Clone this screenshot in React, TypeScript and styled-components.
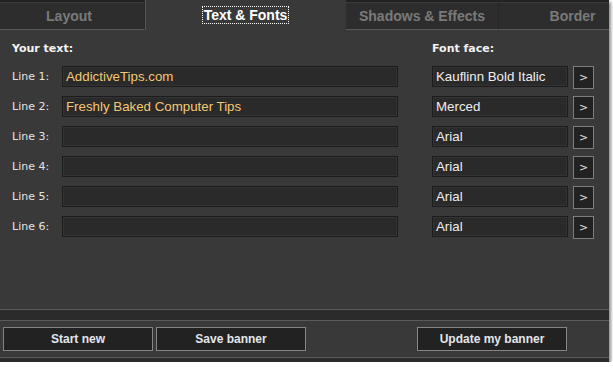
import React from 'react'
import styled, { createGlobalStyle } from 'styled-components'

const GlobalStyle = createGlobalStyle`
  body {
    margin: 0;
    background: #ffffff;
    font-family: "Liberation Sans", Arial, sans-serif;
  }
`

const Window = styled.div`
  display: flex;
  flex-direction: column;
  width: 609px;
  height: 362px;
  overflow: hidden;
  background-color: #393939;
  box-shadow: 2px 2px 3px rgba(0, 0, 0, 0.45);
`

const TabBar = styled.div`
  display: flex;
  flex: 0 0 30px;
  background-color: #232323;
`

const Tab = styled.div<{ $width: number; $active?: boolean; $shift?: number }>`
  flex: 0 0 ${p => p.$width}px;
  display: flex;
  align-items: center;
  justify-content: center;
  box-sizing: border-box;
  margin-top: ${p => (p.$active ? 0 : 2)}px;
  padding-bottom: ${p => (p.$active ? 0 : 1)}px;
  padding-right: ${p => p.$shift ?? 0}px;

  background-color: ${p => (p.$active ? '#393939' : '#2d2d2d')};
  border-top: ${p => (p.$active ? 'none' : '1px solid #3a3a3a')};
  border-bottom: ${p => (p.$active ? 'none' : '1px solid #5a5a5a')};
  border-right: 1px solid ${p => (p.$active ? '#393939' : '#262626')};
  border-left: ${p => (p.$active ? '1px solid #5a5a5a' : 'none')};

  color: ${p => (p.$active ? '#ffffff' : '#7a7a7a')};
  font-size: 14px;
  font-weight: bold;
`

const TabLabel = styled.span<{ $focused?: boolean }>`
  padding: 0 1px;
  line-height: 16px;
  outline: ${p => (p.$focused ? '1px dotted #ffffff' : 'none')};
  outline-offset: 0;
`

const Content = styled.div`
  flex: 1 1 auto;
  padding: 12px 0 0 12px;
`

const HeaderRow = styled.div`
  display: grid;
  grid-template-columns: 420px auto;
  height: 24px;
  color: #f2f2f2;
  font-family: "DejaVu Sans", Verdana, sans-serif;
  font-size: 11px;
  font-weight: bold;
`

const Row = styled.div`
  display: flex;
  align-items: flex-start;
  height: 30px;
`

const LineLabel = styled.div`
  flex: 0 0 50px;
  line-height: 21px;
  color: #e4e4e4;
  font-family: "DejaVu Sans", Verdana, sans-serif;
  font-size: 11px;
`

const Field = styled.div<{ $width: number; $color: string }>`
  flex: 0 0 ${p => p.$width}px;
  box-sizing: border-box;
  height: 21px;
  padding: 0 3px;
  background-color: #2a2a2a;
  border: 1px solid #1c1c1c;
  box-shadow: inset 0 0 0 1px #333;
  color: ${p => p.$color};
  font-size: 13.3px;
  line-height: 19px;
  white-space: nowrap;
  overflow: hidden;
`

const FontField = styled(Field)`
  margin-left: 34px;
`

const PickButton = styled.div`
  flex: 0 0 21px;
  box-sizing: border-box;
  height: 23px;
  margin-left: 5px;
  display: flex;
  align-items: center;
  justify-content: center;
  background-color: #222222;
  border: 1px solid #7d7d7d;
  color: #e0e0e0;
  font-family: "DejaVu Sans", Verdana, sans-serif;
  font-size: 11px;
`

const DividerBar = styled.div`
  flex: 0 0 10px;
  background-color: #2b2b2b;
  border-top: 1px solid #5a5a5a;
  border-bottom: 1px solid #5a5a5a;
`

const Footer = styled.div`
  display: flex;
  padding: 6px 3px 6px 3px;
  border-bottom: 1px solid #5a5a5a;
`

const ActionButton = styled.div<{ $offset?: number }>`
  flex: 0 0 150px;
  box-sizing: border-box;
  height: 24px;
  margin-left: ${p => p.$offset ?? 0}px;
  display: flex;
  align-items: center;
  justify-content: center;
  background-color: #222222;
  border: 1px solid #858585;
  color: #e2e6ec;
  font-size: 12px;
  font-weight: bold;
`

const BottomStrip = styled.div`
  flex: 0 0 4px;
  background-color: #2b2b2b;
`

const lines = [
  { text: 'AddictiveTips.com', font: 'Kauflinn Bold Italic' },
  { text: 'Freshly Baked Computer Tips', font: 'Merced' },
  { text: '', font: 'Arial' },
  { text: '', font: 'Arial' },
  { text: '', font: 'Arial' },
  { text: '', font: 'Arial' },
]

export default function App() {
  return (
    <>
      <GlobalStyle />
      <Window>
        <TabBar>
          <Tab $width={145} $shift={6}>
            <TabLabel>Layout</TabLabel>
          </Tab>
          <Tab $width={201} $active>
            <TabLabel $focused>Text &amp; Fonts</TabLabel>
          </Tab>
          <Tab $width={153}>
            <TabLabel>Shadows &amp; Effects</TabLabel>
          </Tab>
          <Tab $width={148}>
            <TabLabel>Border</TabLabel>
          </Tab>
        </TabBar>
        <Content>
          <HeaderRow>
            <span>Your text:</span>
            <span>Font face:</span>
          </HeaderRow>
          {lines.map((line, i) => (
            <Row key={i}>
              <LineLabel>Line {i + 1}:</LineLabel>
              <Field $width={336} $color="#f3c872">
                {line.text}
              </Field>
              <FontField $width={136} $color="#eeeeee">
                {line.font}
              </FontField>
              <PickButton>&gt;</PickButton>
            </Row>
          ))}
        </Content>
        <DividerBar />
        <Footer>
          <ActionButton>Start new</ActionButton>
          <ActionButton $offset={3}>Save banner</ActionButton>
          <ActionButton $offset={111}>Update my banner</ActionButton>
        </Footer>
        <BottomStrip />
      </Window>
    </>
  )
}
